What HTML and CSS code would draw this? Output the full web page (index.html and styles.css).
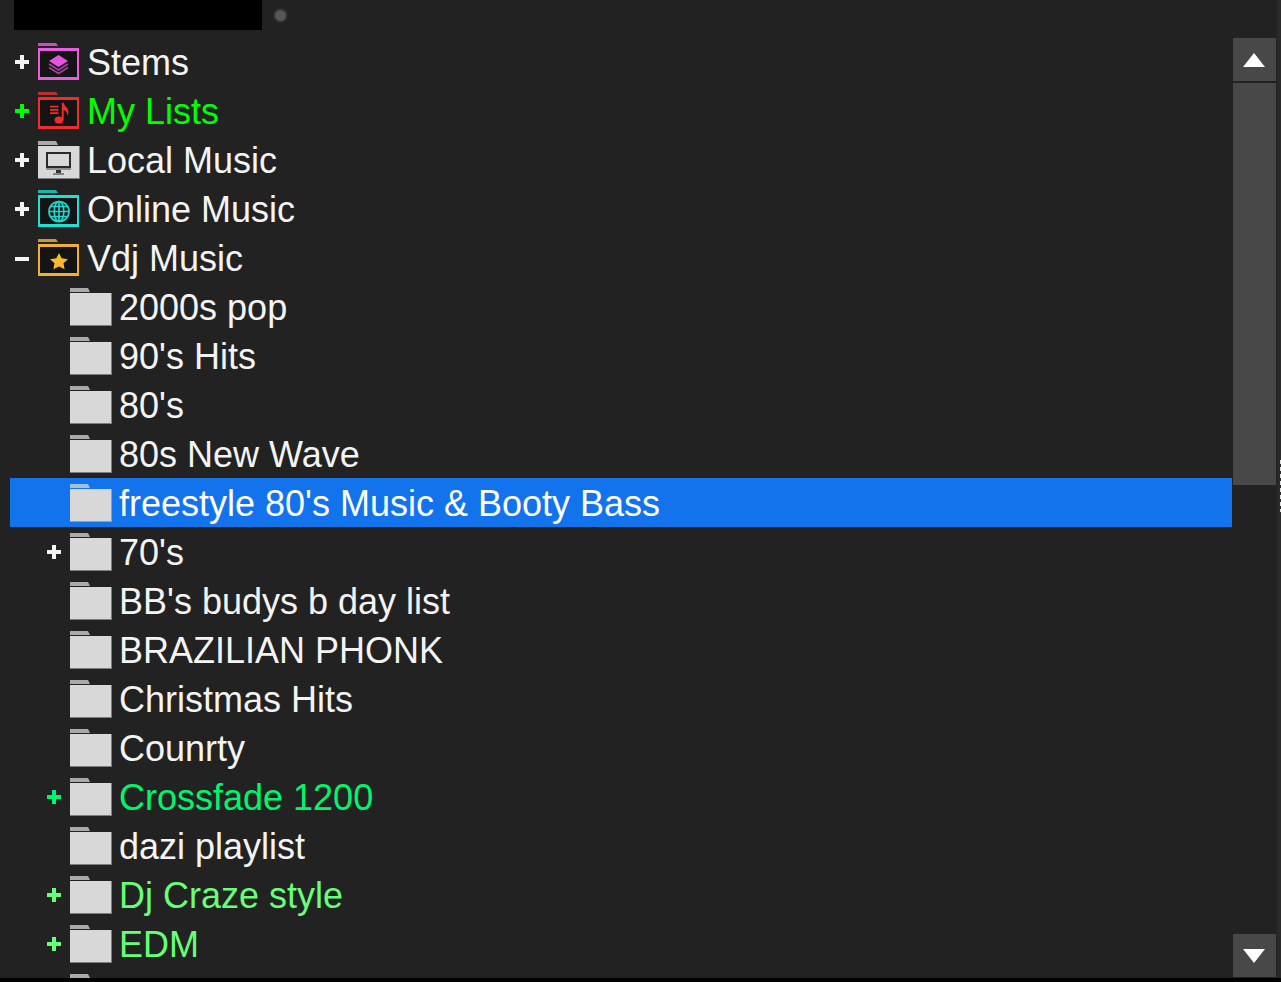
FILE: index.html
```html
<!DOCTYPE html>
<html lang="en">
<head>
  <meta charset="UTF-8" />
  <title>Browser</title>
  <link rel="stylesheet" href="styles.css">
</head>
<body>
  <div class="app">
    <div class="panel">
      <div class="topbar">
        <div class="blackout"></div>
        <div class="dot"></div>
      </div>
      <div class="content">
        <div class="tree">
          <!-- root folders -->
          <div class="row root">
            <span class="toggle plus"></span>
            <span class="folder stems"><i class="tab"></i><span class="body">
              <svg viewBox="0 0 41 32"><path d="M20.500 7 30 13 20.500 19 11 13Z" fill="#e655e0"/><path d="M11 16 20.500 22 30 16M11 19.500 20.500 25.500 30 19.500" fill="none" stroke="#a8409f" stroke-width="1.600"/></svg>
            </span></span>
            <span class="label">Stems</span>
          </div>
          <div class="row root green">
            <span class="toggle plus"></span>
            <span class="folder lists"><i class="tab"></i><span class="body">
              <svg viewBox="0 0 41 32"><path d="M12 8.700h8.500v1.700h-8.500zM12 12h8.500v1.700h-8.500zM12 15.300h8.500v1.700h-8.500z" fill="#f02c2c"/><ellipse cx="21" cy="23" rx="4.400" ry="3.500" fill="#f02c2c"/><path d="M23.800 23V5.700h1.900c.4 3.500 4.700 4.500 4.700 9 0 1.500-.5 2.800-1.200 3.800.2-3-1.500-5-3.500-5.500V23z" fill="#f02c2c"/></svg>
            </span></span>
            <span class="label">My Lists</span>
          </div>
          <div class="row root">
            <span class="toggle plus"></span>
            <span class="folder local"><i class="tab"></i><span class="body">
              <svg viewBox="0 0 41 32"><path d="M9 7h23v14h-23z" fill="#d8d8d8" stroke="#2a2a2a" stroke-width="2"/><path d="M8 23h25" stroke="#7a7a7a" stroke-width="1.500"/><path d="M18 24h5v3h-5z" fill="#333"/><path d="M15 28h11" stroke="#666" stroke-width="1.500"/></svg>
            </span></span>
            <span class="label">Local Music</span>
          </div>
          <div class="row root">
            <span class="toggle plus"></span>
            <span class="folder online"><i class="tab"></i><span class="body">
              <svg viewBox="0 0 41 32" fill="none" stroke="#1fd8cc" stroke-width="1.700"><circle cx="21" cy="16.500" r="10"/><ellipse cx="21" cy="16.500" rx="4.800" ry="10"/><path d="M21 6.500v20M11 16.500h20M12.500 11.500h17M12.500 21.500h17"/></svg>
            </span></span>
            <span class="label">Online Music</span>
          </div>
          <div class="row root">
            <span class="toggle minus"></span>
            <span class="folder vdj"><i class="tab"></i><span class="body">
              <svg viewBox="0 0 41 32"><path d="M21 9 23.700 14.300 30 15.200 25.500 19.300 26.600 25.300 21 22.500 15.400 25.300 16.500 19.300 12 15.200 18.300 14.300Z" fill="#f7b92e"/></svg>
            </span></span>
            <span class="label">Vdj Music</span>
          </div>
          <!-- Vdj Music children -->
          <div class="row child"><span class="toggle"></span><span class="folder"><i class="tab"></i><span class="body"></span></span><span class="label">2000s pop</span></div>
          <div class="row child"><span class="toggle"></span><span class="folder"><i class="tab"></i><span class="body"></span></span><span class="label">90's Hits</span></div>
          <div class="row child"><span class="toggle"></span><span class="folder"><i class="tab"></i><span class="body"></span></span><span class="label">80's</span></div>
          <div class="row child"><span class="toggle"></span><span class="folder"><i class="tab"></i><span class="body"></span></span><span class="label">80s New Wave</span></div>
          <div class="row child selected"><span class="toggle"></span><span class="folder"><i class="tab"></i><span class="body"></span></span><span class="label">freestyle 80's Music &amp; Booty Bass</span></div>
          <div class="row child"><span class="toggle plus"></span><span class="folder"><i class="tab"></i><span class="body"></span></span><span class="label">70's</span></div>
          <div class="row child"><span class="toggle"></span><span class="folder"><i class="tab"></i><span class="body"></span></span><span class="label">BB's budys b day list</span></div>
          <div class="row child"><span class="toggle"></span><span class="folder"><i class="tab"></i><span class="body"></span></span><span class="label">BRAZILIAN PHONK</span></div>
          <div class="row child"><span class="toggle"></span><span class="folder"><i class="tab"></i><span class="body"></span></span><span class="label">Christmas Hits</span></div>
          <div class="row child"><span class="toggle"></span><span class="folder"><i class="tab"></i><span class="body"></span></span><span class="label">Counrty</span></div>
          <div class="row child mint"><span class="toggle plus"></span><span class="folder"><i class="tab"></i><span class="body"></span></span><span class="label">Crossfade 1200</span></div>
          <div class="row child"><span class="toggle"></span><span class="folder"><i class="tab"></i><span class="body"></span></span><span class="label">dazi playlist</span></div>
          <div class="row child lime"><span class="toggle plus"></span><span class="folder"><i class="tab"></i><span class="body"></span></span><span class="label">Dj Craze style</span></div>
          <div class="row child lime"><span class="toggle plus"></span><span class="folder"><i class="tab"></i><span class="body"></span></span><span class="label">EDM</span></div>
          <div class="row child"><span class="toggle"></span><span class="folder"><i class="tab"></i><span class="body"></span></span></div>
        </div>
        <div class="scrollbar">
          <div class="scroll-btn"><span class="arrow up"></span></div>
          <div class="track"><div class="thumb"></div></div>
          <div class="scroll-btn"><span class="arrow down"></span></div>
        </div>
      </div>
    </div>
    <div class="edge"><div class="edge-dots"></div></div>
  </div>
  <div class="bottom-strip"></div>
</body>
</html>
```
FILE: styles.css
```css
* {
  margin: 0;
  padding: 0;
  box-sizing: border-box;
}

html, body {
  height: 100%;
  background-color: #222222;
  font-family: "Liberation Sans", Arial, sans-serif;
  overflow: hidden;
}

body {
  display: flex;
  flex-direction: column;
}

.app {
  display: flex;
  height: 978px;
}

.panel {
  width: 1277px;
  display: flex;
  flex-direction: column;
}

.edge {
  width: 4px;
  background-color: #2a2a2a;
  padding: 460px 0 0 3px;
}

.edge-dots {
  width: 1px;
  height: 52px;
  background: repeating-linear-gradient(#dddddd 0 4px, #2a2a2a 4px 7px);
}

.bottom-strip {
  height: 4px;
  background-color: #000000;
}

/* top bar */
.topbar {
  height: 30px;
  padding-left: 14px;
  display: flex;
  align-items: center;
  gap: 11px;
}

.blackout {
  width: 248px;
  height: 30px;
  background-color: #000000;
}

.dot {
  width: 15px;
  height: 15px;
  border-radius: 50%;
  background-color: #55555a;
  border: 2px solid #303030;
}

.content {
  flex: 1;
  display: flex;
  min-height: 0;
}

/* tree */
.tree {
  width: 1232px;
  padding: 7px 0 0 10px;
  overflow: hidden;
}

.row {
  height: 49px;
  display: flex;
  align-items: center;
  font-size: 36px;
  color: #f4f4f4;
  white-space: nowrap;
}

.row.root {
  padding-left: 5px;
}

.row.child {
  padding-left: 37px;
}

.row.green {
  color: #00ff00;
}

.row.mint {
  color: #00f56e;
}

.row.lime {
  color: #66ff77;
}

.row.selected {
  background-color: #1373ed;
  color: #ffffff;
}

.label {
  margin-left: 7px;
  padding-top: 2px;
}

/* expand toggles */
.toggle {
  width: 14px;
  height: 14px;
  margin-right: 9px;
  flex-shrink: 0;
  position: relative;
}

.toggle.plus::before,
.toggle.minus::before {
  content: "";
  position: absolute;
  left: 0;
  top: 5px;
  width: 14px;
  height: 4px;
  background-color: currentColor;
}

.toggle.plus::after {
  content: "";
  position: absolute;
  left: 5px;
  top: 0;
  width: 4px;
  height: 14px;
  background-color: currentColor;
}

.toggle.minus {
  top: 1px;
}

/* folder icons */
.folder {
  width: 42px;
  height: 37px;
  flex-shrink: 0;
  display: flex;
  flex-direction: column;
  gap: 1px;
}

.folder .tab {
  display: block;
  width: 20px;
  height: 4px;
  flex-shrink: 0;
  background-color: rgba(216, 216, 216, 0.75);
  clip-path: polygon(0 0, 90% 0, 100% 100%, 0 100%);
}

.folder .body {
  display: block;
  height: 33px;
  flex-shrink: 0;
  background-color: #d8d8d8;
  background-clip: padding-box;
  border-right: 1px solid rgba(216, 216, 216, 0.5);
  border-bottom: 1px solid rgba(216, 216, 216, 0.5);
}

.folder svg {
  display: block;
  width: 41px;
  height: 32px;
}

.folder.stems,
.folder.lists,
.folder.online,
.folder.vdj {
  gap: 2px;
}

.folder.stems .tab,
.folder.lists .tab,
.folder.online .tab,
.folder.vdj .tab {
  height: 3px;
}

.folder.stems .body,
.folder.lists .body,
.folder.online .body,
.folder.vdj .body {
  width: 41px;
  height: 32px;
  background-color: #141414;
  border-width: 3px 2px;
  border-style: solid;
}

.folder.stems .body svg,
.folder.lists .body svg,
.folder.online .body svg,
.folder.vdj .body svg {
  margin: -3px -2px;
}

.folder.stems .body { border-color: #e85ce0; }
.folder.stems .tab { background-color: #c94fc0; }
.folder.lists .body { border-color: #f02c2c; }
.folder.lists .tab { background-color: #b83030; }
.folder.online .body { border-color: #1fe0d4; }
.folder.online .tab { background-color: #1ab5ad; }
.folder.vdj .body { border-color: #f0b030; }
.folder.vdj .tab { background-color: #c49a3e; }

/* scrollbar */
.scrollbar {
  width: 43px;
  margin-left: 1px;
  padding: 8px 0 1px;
  display: flex;
  flex-direction: column;
  flex-shrink: 0;
}

.scroll-btn {
  height: 43px;
  flex-shrink: 0;
  padding-right: 1px;
  background-color: #484848;
  display: flex;
  align-items: center;
  justify-content: center;
}

.track {
  flex: 1;
  padding-top: 2px;
}

.thumb {
  height: 402px;
  background-color: #484848;
}

.arrow {
  width: 0;
  height: 0;
  border-left: 11px solid transparent;
  border-right: 11px solid transparent;
}

.arrow.up {
  border-bottom: 14px solid #ffffff;
}

.arrow.down {
  border-top: 14px solid #ffffff;
}
```
